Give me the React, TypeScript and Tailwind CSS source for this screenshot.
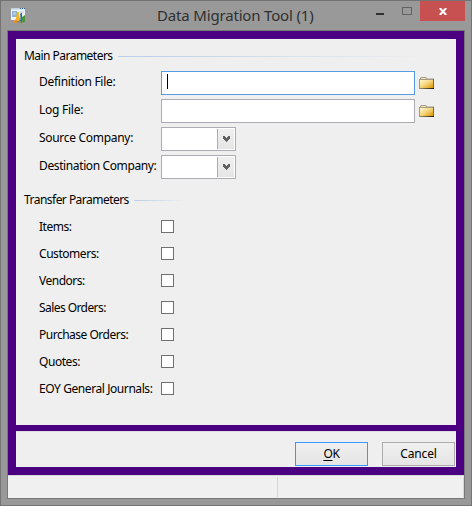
import type { ReactNode } from 'react';

function AppIcon() {
  return (
    <svg width="16" height="16" viewBox="0 0 16 16">
      <g shapeRendering="crispEdges">
        <rect x="0" y="0" width="14" height="12" fill="#eef3f7" />
        <rect x="0" y="0" width="14" height="1" fill="#c0d2e2" />
        <rect x="0" y="1" width="14" height="1" fill="#d8e4ed" />
        <rect x="9" y="0" width="1" height="1" fill="#35608c" />
        <rect x="11" y="0" width="1" height="1" fill="#35608c" />
        <rect x="13" y="0" width="1" height="1" fill="#35608c" />
        <rect x="1" y="3" width="5" height="6" fill="#8bb1d7" />
        <rect x="2" y="4" width="3" height="3" fill="#a9c8e4" />
        <rect x="9" y="3" width="4" height="2" fill="#d2e0ec" />
      </g>
      <path d="M6 4h2v4l1 6-7 .5 3-4z" fill="#f5b51c" />
      <path d="M2 13l4-1v3H2z" fill="#e18a38" />
      <path d="M9 6l2-1.5V14H8.500z" fill="#32668f" />
      <path d="M9 7l1-.6V12H9z" fill="#699bc2" />
      <path d="M11 9l3-2v7l-4 1z" fill="#4d9440" />
      <path d="M6 13h4v2H6z" fill="#8b8f70" />
    </svg>
  );
}

function Folder() {
  return (
    <svg width="16" height="13" viewBox="0 0 16 13">
      <defs>
        <linearGradient id="folderFace" x1="0" y1="0" x2="1" y2="1">
          <stop offset="0" stopColor="#fff9d2" />
          <stop offset="0.5" stopColor="#f5d477" />
          <stop offset="1" stopColor="#dc9200" />
        </linearGradient>
        <linearGradient id="folderShade" x1="0" y1="0" x2="1" y2="0">
          <stop offset="0" stopColor="#9d957b" />
          <stop offset="1" stopColor="#1e1808" />
        </linearGradient>
      </defs>
      <path d="M1 2.5V1L2 0h5l1 1.5h7V12H1z" fill="#a39b83" />
      <path d="M2 1h5v1H2z" fill="#f2e7af" />
      <path d="M1 3h13v8H1z" fill="url(#folderFace)" />
      <path d="M0 2h1v9H0z" fill="#a39b83" />
      <path d="M14 2h1v9h-1z" fill="#796a3f" />
      <path d="M0 11h15v1H0z" fill="url(#folderShade)" />
    </svg>
  );
}

function Label({ children, className = '' }: { children: ReactNode; className?: string }) {
  return (
    <div className="w-[122px] shrink-0 whitespace-nowrap">
      <span className={className}>{children}</span>
    </div>
  );
}

function FileField({ label, active = false, tracking = '' }: { label: string; active?: boolean; tracking?: string }) {
  return (
    <div className="flex h-6 items-center">
      <Label className={tracking}>{label}</Label>
      <div className={`h-6 w-[254px] border bg-white ${active ? 'border-[#569de5]' : 'border-[#abadb3]'}`}>
        {active && <div className="ml-[5px] mt-[2px] h-[15px] w-px bg-black" />}
      </div>
      <div className="ml-1"><Folder /></div>
    </div>
  );
}

function CompanyField({ label, tracking = '' }: { label: string; tracking?: string }) {
  return (
    <div className="flex h-6 items-center">
      <Label className={tracking}>{label}</Label>
      <div className="flex h-6 w-[75px] justify-end border border-[#abadb3] bg-white p-px">
        <div className="flex w-[17px] items-center justify-center border-l border-[#abadb3] bg-gradient-to-b from-[#f0f0f0] to-[#e5e5e5]">
          <svg width="7" height="6" viewBox="0 0 7 6" shapeRendering="crispEdges">
            <path d="M0 0h2v1h1v1h1V1h1V0h2v3H6v1H5v1H4v1H3V5H2V4H1V3H0z" fill="#606060" />
          </svg>
        </div>
      </div>
    </div>
  );
}

function Heading({ children, className, line }: { children: ReactNode; className: string; line: string }) {
  return (
    <div className="flex h-4 items-center whitespace-nowrap">
      <div className={className}>{children}</div>
      <div className={`h-px bg-gradient-to-r from-[#b8cfe8] to-[#efefef] ${line}`} />
    </div>
  );
}

const transfers = [
  ['Items:', 'tracking-[-0.5px]'],
  ['Customers:', 'tracking-[-0.45px]'],
  ['Vendors:', 'tracking-[-0.5px]'],
  ['Sales Orders:', 'tracking-[-0.57px]'],
  ['Purchase Orders:', 'tracking-[-0.5px]'],
  ['Quotes:', 'tracking-[-0.45px]'],
  ['EOY General Journals:', 'tracking-[-0.42px]'],
];

export default function App() {
  return (
    <div className="flex h-[506px] w-[472px] flex-col border border-[#737373] bg-[#999999] px-[6px] pb-[6px] font-['Noto_Sans',sans-serif] text-[12px] leading-4 text-black">
      <header className="flex h-[29px] shrink-0 text-[#303030]">
        <div className="w-[143px] pl-1 pt-[7px]"><AppIcon /></div>
        <div className="w-[219px] whitespace-nowrap pl-[7px] pt-[3px] text-[15px] leading-[22px] tracking-[-0.17px]">Data Migration Tool (1)</div>
        <div className="ml-[7px] mt-3 h-[2px] w-2 bg-[#303030]" />
        <div className="ml-[18px] mt-[6px] h-2 w-[10px] border border-[#626262]" />
        <div className="ml-2 flex h-5 w-[45px] shrink-0 items-center justify-center bg-[#c75050]">
          <svg width="8" height="7" viewBox="0 0 8 7"><path d="M.8 0l6.4 7M7.2 0L.8 7" stroke="white" strokeWidth="2" /></svg>
        </div>
      </header>
      <div className="flex h-[469px] w-[458px] shrink-0 flex-col border border-[#777] bg-[#4b0082]">
        <main className="mx-2 mt-2 h-[386px] shrink-0 bg-[#efefef] pl-2 pt-[9px]">
          <Heading className="w-[94px] tracking-[-0.53px]" line="w-[310px]">Main Parameters</Heading>
          <div className="mt-[7px] flex flex-col gap-1 pl-[15px]">
            <FileField label="Definition File:" tracking="relative -top-px tracking-[-0.28px]" active />
            <FileField label="Log File:" tracking="relative -top-px tracking-[-0.25px]" />
            <CompanyField label="Source Company:" tracking="relative -top-px tracking-[-0.3px]" />
            <CompanyField label="Destination Company:" tracking="relative -top-px tracking-[-0.38px]" />
          </div>
          <div className="mt-[13px]"><Heading className="w-[110px] tracking-[-0.53px]" line="w-[52px]">Transfer Parameters</Heading></div>
          <div className="mt-[5px] pl-[15px]">
            {transfers.map(([label, tracking]) => (
              <div key={label} className="flex h-[27px] items-center">
                <Label className={tracking}>{label}</Label>
                <div className="size-[13px] border border-[#707070] bg-white" />
              </div>
            ))}
          </div>
        </main>
        <div className="mx-2 mt-[6px] flex h-9 shrink-0 justify-end gap-[14px] border-t border-[#dedede] bg-[#efefef] pr-px pt-[10px]">
          <button className="h-6 w-[73px] border border-[#3399ff] bg-gradient-to-b from-[#efefef] to-[#e5e5e5] tracking-[-0.3px]"><span className="underline underline-offset-2">O</span>K</button>
          <button className="h-6 w-[73px] border border-[#acacac] bg-gradient-to-b from-[#f0f0f0] to-[#e5e5e5] tracking-[-0.15px]">Cancel</button>
        </div>
        <footer className="mt-2 flex h-[23px] shrink-0 border-t border-[#d7d7d7] bg-[#f0f0f0]">
          <div className="my-px w-[270px] border-r border-[#d7d7d7]" />
          <div className="my-px flex-1 border-r border-[#d7d7d7]" />
        </footer>
      </div>
    </div>
  );
}
